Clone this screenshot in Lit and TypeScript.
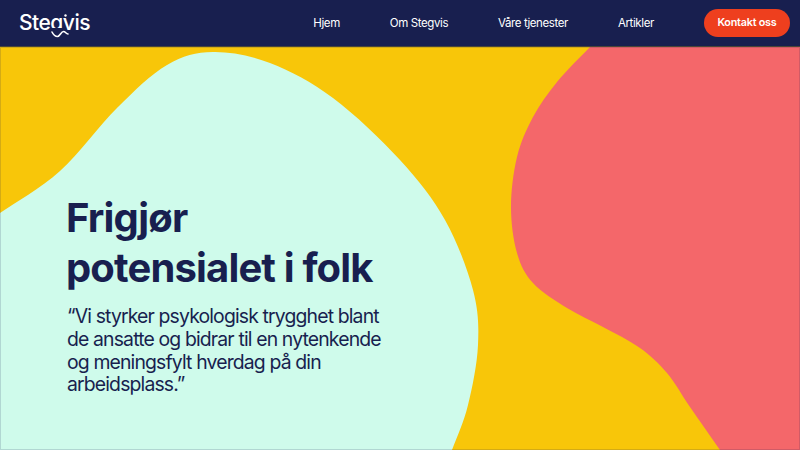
import { LitElement, css, html } from 'lit';
import { customElement } from 'lit/decorators.js';

const links = ['Hjem', 'Om Stegvis', 'Våre tjenester', 'Artikler'];

const mint = [
  [-30, 232], [0, 213], [60, 171], [117, 108], [167, 65], [213, 52],
  [270, 63], [333, 98], [400, 160], [445, 220], [473, 290],
  [478, 345], [468, 405], [452, 450], [436, 490],
];
const coral = [
  [610, 27], [590, 47], [557, 82], [533, 117], [517, 157], [511, 207], [517, 253], [533, 283], [567, 308],
  [603, 327], [640, 348], [667, 373], [690, 407], [720, 450], [740, 480],
];

// catmull-rom through the traced edge points, then closed along the given corners
function blob(pts: number[][], closing: string) {
  let d = `M${pts[0][0]} ${pts[0][1]}`;
  for (let i = 0; i < pts.length - 1; i++) {
    const p0 = pts[Math.max(i - 1, 0)];
    const p1 = pts[i];
    const p2 = pts[i + 1];
    const p3 = pts[Math.min(i + 2, pts.length - 1)];
    const c1 = [p1[0] + (p2[0] - p0[0]) / 6, p1[1] + (p2[1] - p0[1]) / 6];
    const c2 = [p2[0] - (p3[0] - p1[0]) / 6, p2[1] - (p3[1] - p1[1]) / 6];
    d += ` C${c1[0]} ${c1[1]} ${c2[0]} ${c2[1]} ${p2[0]} ${p2[1]}`;
  }
  return `${d} ${closing} Z`;
}

@customElement('app-root')
export class AppRoot extends LitElement {
  static styles = css`
    :host {
      display: block;
      width: 800px;
      height: 450px;
      overflow: hidden;
      font-family: Inter, 'Liberation Sans', sans-serif;
      color: #181f4f;
    }
    header {
      display: flex;
      align-items: center;
      justify-content: space-between;
      height: 46px;
      padding: 0 10px 0 19px;
      background: #181f4f;
      border-bottom: 1px solid #4a4638;
      color: #fff;
    }
    .logo {
      display: flex;
      position: relative;
      font-size: 21px;
      font-weight: 500;
      letter-spacing: -0.5px;
      line-height: 1;
      margin-top: -1px;
    }
    .logo-g {
      display: inline-block;
      clip-path: inset(0 0 5px 0);
    }
    .swash {
      position: absolute;
      left: 31px;
      top: 0;
    }
    nav {
      display: flex;
      align-items: center;
      gap: 50px;
    }
    nav a {
      font-size: 11.5px;
      font-weight: 400;
      letter-spacing: -0.4px;
    }
    .cta {
      padding: 0 13.5px;
      height: 28px;
      line-height: 28px;
      border-radius: 14px;
      background: #ee3f1e;
      font-size: 10.8px;
      font-weight: 600;
      letter-spacing: -0.22px;
    }
    .hero {
      position: relative;
      height: 403px;
      background: #f8c609;
    }
    .hero::after {
      content: '';
      position: absolute;
      inset: 0;
      box-shadow: inset 0 0 0 1px rgba(24, 31, 79, 0.16);
    }
    .shapes {
      position: absolute;
      inset: 0;
    }
    .content {
      position: relative;
      padding: 146px 0 0 66px;
    }
    h1 {
      margin: 0 0 12px;
      font-size: 40px;
      line-height: 50px;
      font-weight: 650;
      letter-spacing: -0.85px;
    }
    p {
      margin: 0 0 0 1px;
      font-size: 19.4px;
      line-height: 22.8px;
      font-weight: 400;
      letter-spacing: -0.85px;
      white-space: nowrap;
    }
  `;

  render() {
    return html`
      <header>
        <div class="logo">
          Ste<span class="logo-g">g</span>vis
          <svg class="swash" width="22" height="40" viewBox="0 0 22 40" fill="none">
            <circle cx="15.5" cy="3.5" r="1.2" fill="#fff" />
            <path d="M2 20c1.500 3 3.500 4.500 5.500 4.500 2.500 0 3.500-5 6-5 2 0 2.500 2.500 4.500 2.500" stroke="#fff" stroke-width="1.6" stroke-linecap="round" />
          </svg>
        </div>
        <nav>
          ${links.map((l) => html`<a>${l}</a>`)}
          <div class="cta">Kontakt oss</div>
        </nav>
      </header>
      <section class="hero">
        <svg class="shapes" width="800" height="403" viewBox="0 47 800 403">
          <path fill="#cffbeb" d=${blob(mint, 'L-30 490')} />
          <path fill="#f4676a" d=${blob(coral, 'L820 480 L820 27')} />
        </svg>
        <div class="content">
          <h1>Frigjør<br />potensialet i folk</h1>
          <p>
            “Vi styrker psykologisk trygghet blant<br />
            de ansatte og bidrar til en nytenkende<br />
            og meningsfylt hverdag på din<br />
            arbeidsplass.”
          </p>
        </div>
      </section>
    `;
  }
}
